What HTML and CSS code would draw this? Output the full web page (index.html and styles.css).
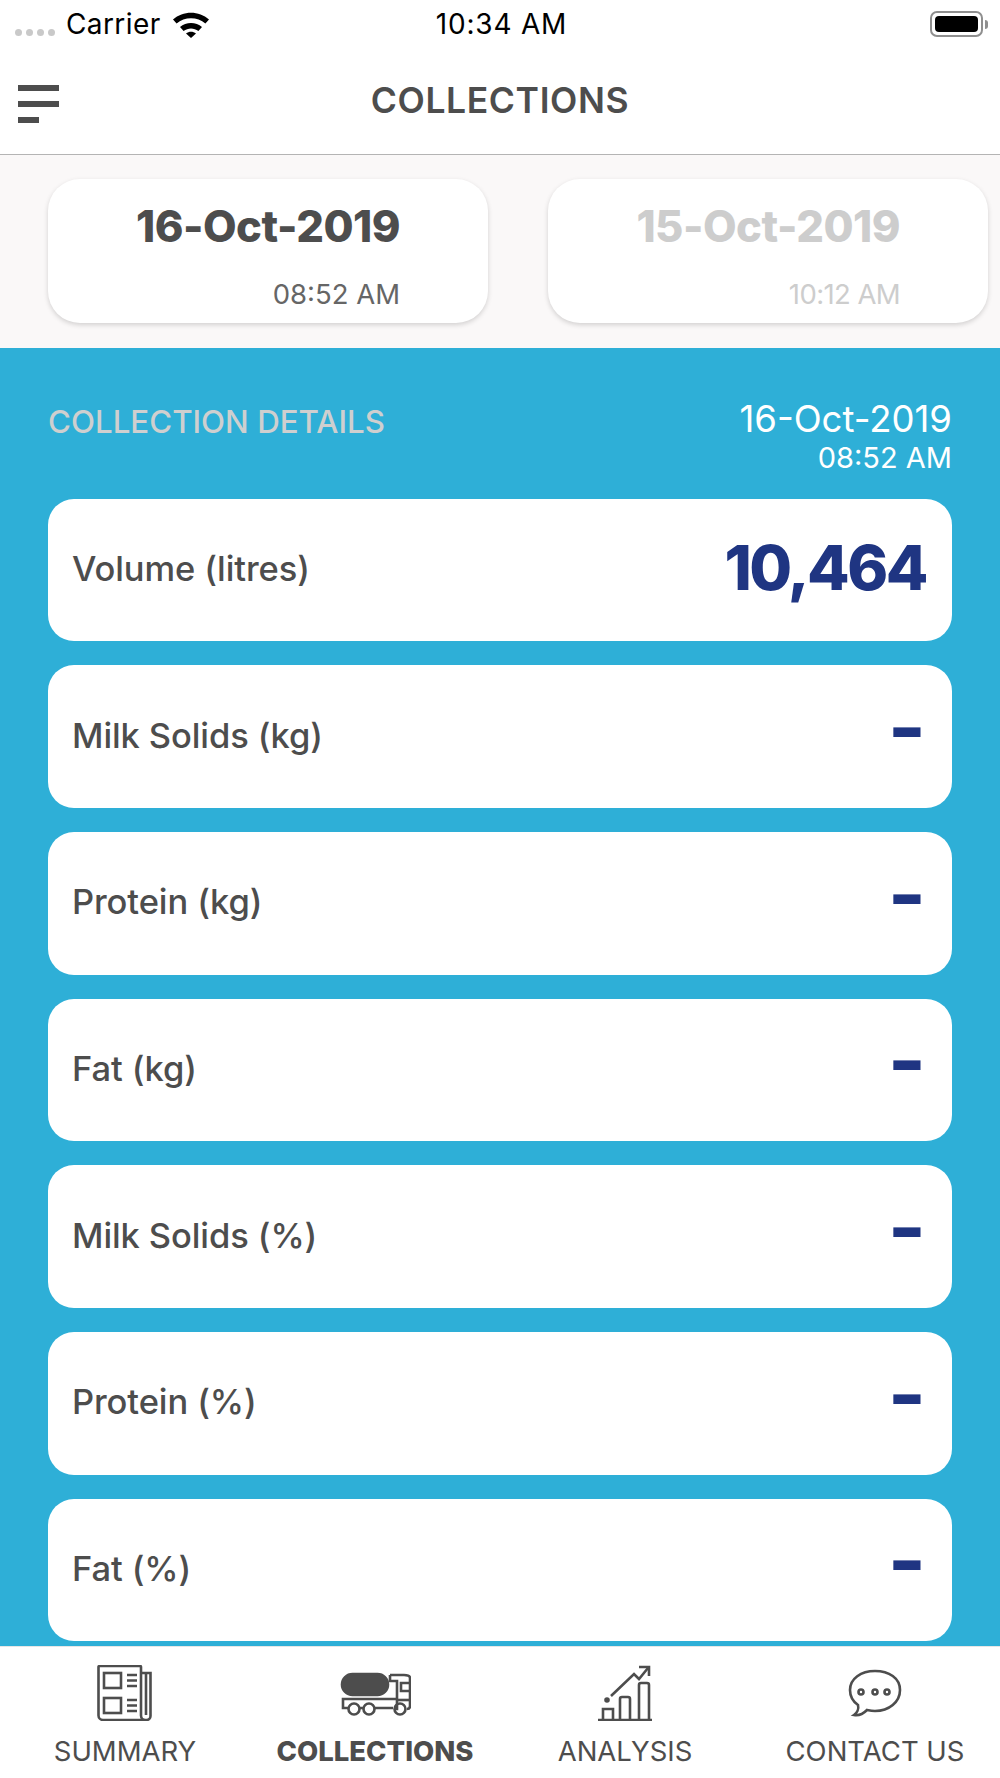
FILE: index.html
```html
<!DOCTYPE html>
<html lang="en">
<head>
<meta charset="utf-8">
<title>Collections</title>
<link rel="stylesheet" href="styles.css">
</head>
<body>
<div class="phone">
  <div class="status">
    <div class="status-left">
      <span class="dots"><i></i><i></i><i></i><i></i></span>
      <span class="carrier">Carrier</span>
      <svg class="wifi" width="38" height="28" viewBox="0 0 38 28"><path d="M1 9.500C11 .5 27 .5 37 9.500l-3.600 4C25.500 6.500 12.500 6.500 4.600 13.500z"/><path d="M8 17C14 11.500 24 11.500 30 17l-3.600 4C22 17.500 16 17.500 11.600 21z"/><path d="M14 23.500c3-2.500 7-2.500 10 0l-5 4.500z"/></svg>
    </div>
    <div class="clock">10:34 AM</div>
    <div class="status-right">
      <span class="battery"><i></i></span><span class="nub"></span>
    </div>
  </div>

  <header class="topbar">
    <div class="menu"><i></i><i></i><i class="short"></i></div>
    <h1 class="title">COLLECTIONS</h1>
  </header>

  <section class="dates">
    <div class="date-card">
      <div class="date">16-Oct-2019</div>
      <div class="time">08:52 AM</div>
    </div>
    <div class="date-card faded">
      <div class="date">15-Oct-2019</div>
      <div class="time">10:12 AM</div>
    </div>
  </section>

  <main class="details">
    <div class="details-head">
      <div class="details-title">COLLECTION DETAILS</div>
      <div class="details-when">
        <div class="when-date">16-Oct-2019</div>
        <div class="when-time">08:52 AM</div>
      </div>
    </div>
    <div class="rows">
      <div class="row"><span class="label">Volume (litres)</span><span class="value">10,464</span></div>
      <div class="row"><span class="label">Milk Solids (kg)</span><span class="value dash">-</span></div>
      <div class="row"><span class="label">Protein (kg)</span><span class="value dash">-</span></div>
      <div class="row"><span class="label">Fat (kg)</span><span class="value dash">-</span></div>
      <div class="row"><span class="label">Milk Solids (%)</span><span class="value dash">-</span></div>
      <div class="row"><span class="label">Protein (%)</span><span class="value dash">-</span></div>
      <div class="row"><span class="label">Fat (%)</span><span class="value dash">-</span></div>
    </div>
  </main>

  <nav class="tabs">
    <div class="tab">
      <svg class="icon" width="56" height="56" viewBox="0 0 56 56">
        <path d="M44 8h9.500v43a4 4 0 0 1-4 4H6a4.500 4.500 0 0 1-4.500-4.500V2a1 1 0 0 1 1-1H43a1 1 0 0 1 1 1v48.500a4.500 4.500 0 0 0 4.500 4.500"/>
        <path d="M49 8v42"/>
        <rect x="7" y="8" width="17" height="15"/>
        <rect x="7" y="33" width="17" height="15"/>
        <path d="M30 10h10M30 15.500h10M30 21h10M30 35h10M30 40.500h10M30 46h10"/>
      </svg>
      <span class="tab-label">SUMMARY</span>
    </div>
    <div class="tab active">
      <svg class="icon" width="72" height="56" viewBox="0 0 72 56">
        <rect class="solid" x="3" y="9" width="46" height="21" rx="10.500"/>
        <path d="M51 10h14c3 0 6 1 6 3v28c0 2-1 3-3 3"/>
        <path d="M51 10v6h7v28h-2M51 16h7"/>
        <path d="M71 18H62v8h9"/>
        <path d="M58 35h13"/>
        <path d="M9 43H4v-9h54M21 43h3M36 43h18"/>
        <circle cx="15" cy="44" r="5.500"/>
        <circle cx="30" cy="44" r="5.500"/>
        <circle cx="61" cy="44" r="5.500"/>
      </svg>
      <span class="tab-label">COLLECTIONS</span>
    </div>
    <div class="tab">
      <svg class="icon" width="56" height="56" viewBox="0 0 56 56">
        <path d="M1 55h54"/>
        <path d="M6 54V44h10v10M23 54V34a2 2 0 0 1 2-2h6a2 2 0 0 1 2 2v20M42 54V20a2 2 0 0 1 2-2h6a2 2 0 0 1 2 2v34"/>
        <path d="M14 31l23-22 5 5 9-11"/>
        <path d="M42 2h10v9"/>
        <circle class="solid" cx="10" cy="35" r="1.500"/>
      </svg>
      <span class="tab-label">ANALYSIS</span>
    </div>
    <div class="tab">
      <svg class="icon" width="56" height="56" viewBox="0 0 56 56">
        <path d="M28 6C14 6 3 13.500 3 25c0 6 3 11.500 8 15 1 4-1 8-4 10 5 1 10-2 13-5 2.500.5 5 1 8 1 14 0 25-9 25-21S42 6 28 6z"/>
        <circle cx="14" cy="27" r="2.500"/>
        <circle cx="28" cy="27" r="2.500"/>
        <circle cx="40" cy="27" r="2.500"/>
      </svg>
      <span class="tab-label">CONTACT US</span>
    </div>
  </nav>
</div>
</body>
</html>
```

FILE: styles.css
```css
* { box-sizing: border-box; margin: 0; padding: 0; }

html, body { background: #fff; }

body {
  font-family: Inter, "Liberation Sans", sans-serif;
  color: #4d4d4d;
}

.phone {
  width: 1000px;
  height: 1778px;
  display: flex;
  flex-direction: column;
  overflow: hidden;
}

/* status bar */
.status {
  height: 46px;
  display: grid;
  grid-template-columns: 1fr auto 1fr;
  align-items: center;
  padding: 2px 12px 0 15px;
  color: #000;
}

.status-left { display: flex; align-items: center; }

.dots { display: flex; gap: 4px; margin: 16px 11px 0 0; }
.dots i { width: 7px; height: 7px; border-radius: 50%; background: #c9c9c9; }

.carrier { font-size: 28px; letter-spacing: 0.4px; margin-right: 11px; }
.wifi { fill: #000; }
.clock { font-size: 28px; letter-spacing: 0.8px; }

.status-right { display: flex; align-items: center; justify-content: flex-end; }

.battery {
  width: 53px;
  height: 26px;
  border: 2px solid #8f8f8f;
  border-radius: 7px;
  padding: 3px;
  display: flex;
}
.battery i { flex: 1; background: #000; border-radius: 4px; }
.nub { width: 3px; height: 9px; margin-left: 2px; background: #8f8f8f; border-radius: 0 3px 3px 0; }

/* top bar */
.topbar {
  height: 109px;
  border-bottom: 1px solid #b4b4b4;
  position: relative;
  display: flex;
  align-items: center;
  justify-content: center;
}

.menu {
  position: absolute;
  left: 18px;
  top: 39px;
  width: 41px;
  display: flex;
  flex-direction: column;
  gap: 10px;
}
.menu i { height: 6px; background: #4d4d4d; }
.menu .short { width: 21px; }

.title { font-size: 35.500px; font-weight: 600; letter-spacing: 0.6px; color: #4d4d4d; }

/* date cards */
.dates {
  height: 193px;
  background: #faf8f8;
  display: grid;
  grid-template-columns: 440px 440px;
  column-gap: 60px;
  padding: 24px 12px 0 48px;
}

.date-card {
  height: 144px;
  background: #fff;
  border-radius: 32px;
  box-shadow: 0 2px 5px rgba(0, 0, 0, .16);
  padding: 22px 88px 0 0;
  text-align: right;
}

.date { font-size: 43.500px; font-weight: 800; line-height: 50px; color: #4d4d4d; letter-spacing: -0.5px; }
.time { font-size: 27.500px; line-height: 34px; margin-top: 26px; color: #666; }
.faded .date, .faded .time { color: #cdcdcd; }
.faded .time { letter-spacing: -0.6px; }

/* details */
.details {
  height: 1298px;
  background: #2eafd7;
  padding: 0 48px;
}

.details-head {
  height: 150.500px;
  display: flex;
  justify-content: space-between;
  padding-top: 50px;
}

.details-title { font-size: 31.300px; font-weight: 500; color: #cfcfcf; line-height: 48px; }
.when-date { font-size: 36.500px; line-height: 42px; color: #fff; text-align: right; }
.when-time { font-size: 29px; line-height: 35px; color: #fff; text-align: right; }

.rows { display: flex; flex-direction: column; gap: 24px; }

.row {
  height: 142.700px;
  background: #fff;
  border-radius: 26px;
  display: flex;
  justify-content: space-between;
  align-items: center;
  padding: 0 26px 3px 24px;
}

.label { font-size: 34.500px; font-weight: 500; color: #4d4d4d; letter-spacing: -0.1px; }
.value { font-size: 62px; font-weight: 800; letter-spacing: -2.500px; color: #1f3582; line-height: 76px; }
.dash { font-size: 82px; font-weight: 700; letter-spacing: 0; margin-top: -14px; }

/* tab bar */
.tabs {
  flex: 1;
  background: #fff;
  border-top: 1px solid #e6e6e6;
  display: grid;
  grid-template-columns: repeat(4, 1fr);
  position: relative;
}

.tab {
  display: flex;
  flex-direction: column;
  align-items: center;
  padding-top: 18px;
}

.icon { fill: none; stroke: #4d4d4d; stroke-width: 2.600; }
.icon .solid { fill: #4d4d4d; stroke: #4d4d4d; }

.tab-label { font-size: 27.500px; line-height: 36px; margin-top: 12px; color: #4d4d4d; }
.active .tab-label { font-weight: 800; }
```
